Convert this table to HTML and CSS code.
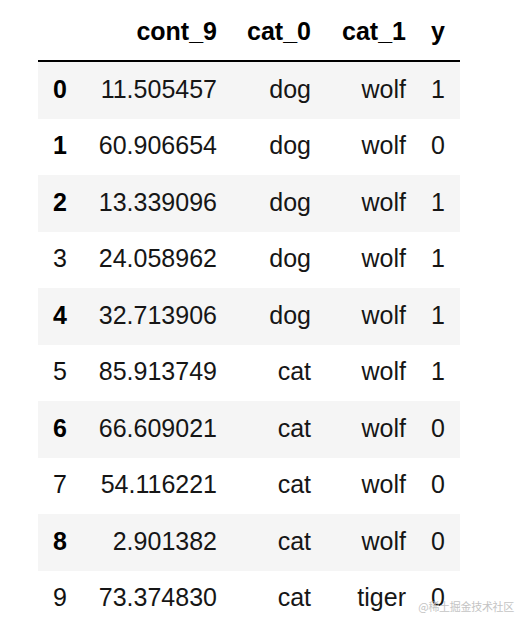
FILE: index.html
```html
<!DOCTYPE html>
<html>
<head>
<meta charset="utf-8">
<link rel="stylesheet" href="styles.css">
</head>
<body>
<div class="page">
<table class="df">
  <colgroup>
    <col class="c-idx"><col class="c-cont"><col class="c-cat0"><col class="c-cat1"><col class="c-y">
  </colgroup>
  <thead>
    <tr><th class="idx"></th><th>cont_9</th><th>cat_0</th><th>cat_1</th><th class="last">y</th></tr>
  </thead>
  <tbody>
    <tr><th class="idx">0</th><td>11.505457</td><td>dog</td><td>wolf</td><td class="last">1</td></tr>
    <tr><th class="idx">1</th><td>60.906654</td><td>dog</td><td>wolf</td><td class="last">0</td></tr>
    <tr><th class="idx">2</th><td>13.339096</td><td>dog</td><td>wolf</td><td class="last">1</td></tr>
    <tr><th class="idx lite">3</th><td>24.058962</td><td>dog</td><td>wolf</td><td class="last">1</td></tr>
    <tr><th class="idx">4</th><td>32.713906</td><td>dog</td><td>wolf</td><td class="last">1</td></tr>
    <tr><th class="idx lite">5</th><td>85.913749</td><td>cat</td><td>wolf</td><td class="last">1</td></tr>
    <tr><th class="idx">6</th><td>66.609021</td><td>cat</td><td>wolf</td><td class="last">0</td></tr>
    <tr><th class="idx lite">7</th><td>54.116221</td><td>cat</td><td>wolf</td><td class="last">0</td></tr>
    <tr><th class="idx">8</th><td>2.901382</td><td>cat</td><td>wolf</td><td class="last">0</td></tr>
    <tr><th class="idx lite">9</th><td>73.374830</td><td>cat</td><td>tiger</td><td class="last">0</td></tr>
  </tbody>
</table>
<div class="watermark">@稀土掘金技术社区</div>
</div>
</body>
</html>
```

FILE: styles.css
```css
html, body {
  margin: 0;
  padding: 0;
  background: #ffffff;
}
.page {
  position: relative;
  width: 520px;
  height: 626px;
  overflow: hidden;
  padding-left: 38px;
  box-sizing: border-box;
  font-family: "Liberation Sans", Arial, sans-serif;
}
.df {
  border-collapse: collapse;
  table-layout: fixed;
  width: 422px;
  font-size: 25px;
  line-height: 28px;
  color: #161616;
}
.c-idx { width: 42px; }
.c-cont { width: 151px; }
.c-cat0 { width: 94px; }
.c-cat1 { width: 95px; }
.c-y { width: 40px; }
.df th, .df td {
  padding: 0 14px 0 0;
  text-align: right;
  white-space: nowrap;
}
.df .last { padding-right: 15px; }
.df thead th {
  height: 28px;
  padding-top: 17px;
  padding-bottom: 15px;
  border-bottom: 2px solid #000;
  color: #000;
  font-weight: bold;
  vertical-align: bottom;
}
.df tbody tr { height: 56.5px; }
.df tbody th, .df tbody td {
  padding-top: 12.5px;
  padding-bottom: 16px;
  vertical-align: top;
}
.df tbody tr:nth-child(odd) { background: #f5f5f5; }
.df .idx {
  text-align: left;
  padding-left: 15px;
  padding-right: 0;
  font-weight: bold;
  color: #000;
}
.df .idx.lite { font-weight: normal; color: #111; }
.watermark {
  position: absolute;
  right: 6px;
  bottom: 14px;
  font-family: "Noto Sans CJK SC", sans-serif;
  font-size: 11px;
  line-height: 12px;
  color: #c4c4c4;
  letter-spacing: -0.3px;
}
```
